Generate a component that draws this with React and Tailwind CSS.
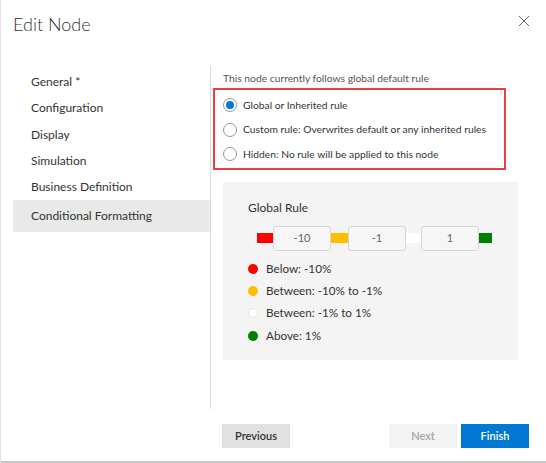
import React from "react";

const navItems = [
  "General *",
  "Configuration",
  "Display",
  "Simulation",
  "Business Definition",
  "Conditional Formatting",
];

const options = [
  { label: "Global or Inherited rule", checked: true },
  { label: "Custom rule: Overwrites default or any inherited rules" },
  { label: "Hidden: No rule will be applied to this node" },
];

const legend = [
  { color: "bg-[#ff0000]", text: "Below: -10%" },
  { color: "bg-[#ffbf00]", text: "Between: -10% to -1%" },
  { color: "bg-white border border-[#e4e4e4]", text: "Between: -1% to 1%" },
  { color: "bg-[#008000]", text: "Above: 1%" },
];

const Radio = ({ checked }) => (
  <span className="flex h-[14px] w-[14px] shrink-0 items-center justify-center rounded-full border border-[#9a9a9a] bg-white">
    {checked && <span className="h-[8px] w-[8px] rounded-full bg-[#0078d4]" />}
  </span>
);

const ValueBox = ({ value }) => (
  <div className="flex h-[25px] w-[58px] items-center justify-center rounded-[3px] border border-[#d6d6d6] bg-[#f6f6f6] text-[11px] text-[#666]">
    {value}
  </div>
);

export default function App() {
  return (
    <div
      className="flex h-[463px] w-[546px] flex-col border-l border-[#e2e2e2] bg-white text-[#333]"
      style={{ fontFamily: '"Segoe UI", Lato, sans-serif' }}
    >
      {/* Header */}
      <div className="flex h-[40px] items-start justify-between pl-[12px] pr-[16px] pt-[10px]">
        <h1 className="text-[18px] font-light leading-[28px] text-[#333]">Edit Node</h1>
        <svg className="mt-[5px]" width="12" height="12" viewBox="0 0 12 12">
          <path d="M1 1L11 11M11 1L1 11" stroke="#666" strokeWidth="1" />
        </svg>
      </div>

      {/* Body */}
      <div className="mt-[26px] flex h-[343px]">
        {/* Nav */}
        <div className="flex w-[209px] flex-col pl-[12px] pt-[3px]">
          {navItems.map((item, i) => {
            const active = i === navItems.length - 1;
            return (
              <div
                key={item}
                className={`flex items-center pl-[18px] text-[12px] text-[#333] ${
                  active ? "h-[32px] bg-[#e9e9e9]" : "h-[26.25px]"
                }`}
              >
                {item}
              </div>
            );
          })}
        </div>

        {/* Content */}
        <div className="flex-1 border-l border-[#dcdcdc] pl-[2px]">
          <p className="pl-[10px] pt-[3px] text-[10.3px] leading-[18px] text-[#555]">
            This node currently follows global default rule
          </p>
          <div className="mt-[1px] w-[293px] border-2 border-[#e8413b] pb-[1px] pl-[8px] pt-[3px]">
            {options.map((o) => (
              <label key={o.label} className="flex h-[24.5px] items-center gap-[6px] whitespace-nowrap text-[10.3px] text-[#333]">
                <Radio checked={o.checked} />
                {o.label}
              </label>
            ))}
          </div>

          {/* Global rule panel */}
          <div className="ml-[10px] mt-[12px] h-[178px] w-[295px] bg-[#f4f4f4] pl-[25px] pt-[16px]">
            <p className="text-[12px] leading-[20px] text-[#333]">Global Rule</p>
            <div className="ml-[9px] mt-[8px] flex items-center">
              <span className="h-[10px] w-[16px] bg-[#ff0000]" />
              <ValueBox value="-10" />
              <span className="h-[10px] w-[17px] bg-[#ffbf00]" />
              <ValueBox value="-1" />
              <span className="h-[10px] w-[15px] bg-white" />
              <ValueBox value="1" />
              <span className="h-[10px] w-[13px] bg-[#008000]" />
            </div>
            <div className="mt-[7px] flex flex-col">
              {legend.map((l) => (
                <div key={l.text} className="flex h-[22.3px] items-center gap-[8px] text-[11.7px] text-[#333]">
                  <span className={`h-[10px] w-[10px] rounded-full ${l.color}`} />
                  {l.text}
                </div>
              ))}
            </div>
          </div>
        </div>
      </div>

      {/* Footer */}
      <div className="mt-[15px] flex items-center pl-[221px] pr-[17px]">
        <button className="h-[24px] w-[68px] bg-[#e1e1e1] text-[11px] font-semibold text-[#333]">
          Previous
        </button>
        <div className="flex-1" />
        <button className="h-[24px] w-[68px] bg-[#f3f3f3] text-[11px] font-semibold text-[#a6a6a6]">
          Next
        </button>
        <button className="ml-[4px] h-[24px] w-[68px] bg-[#0078d4] text-[11px] font-semibold text-white">
          Finish
        </button>
      </div>
      <div className="flex-1" />
      <div className="h-[2px] bg-[#c8c8c8]" />
    </div>
  );
}
